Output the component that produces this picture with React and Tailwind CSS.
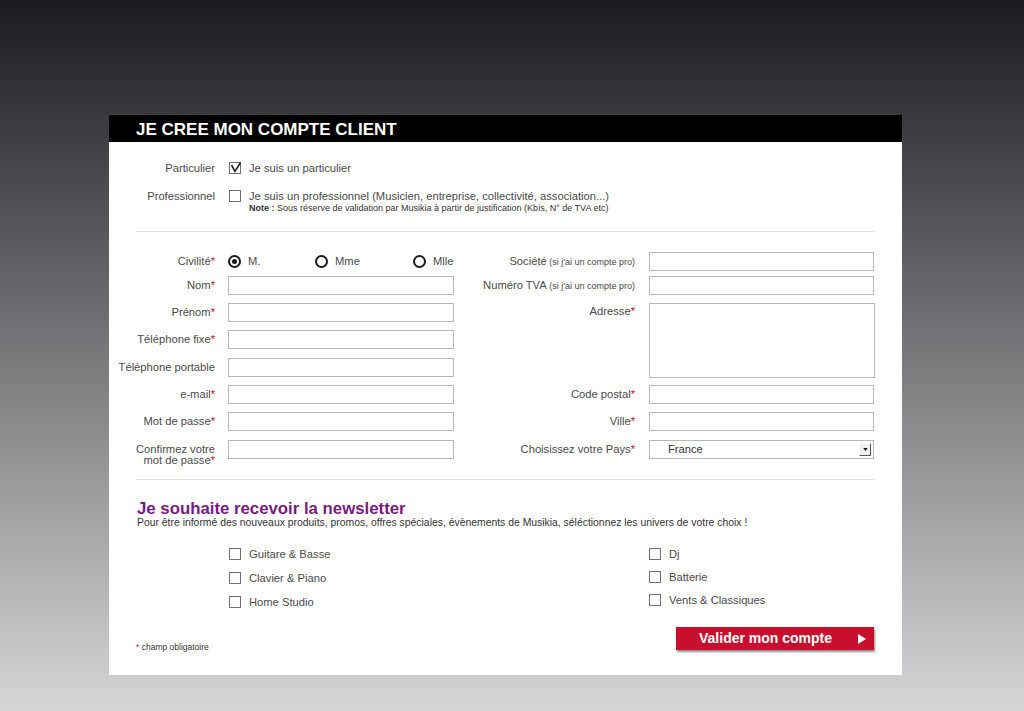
import React from "react";

// Petits composants de formulaire (style années 2010)
const Req = () => <span className="text-[#c8102e]">*</span>;

const Box = ({ checked }) => (
  <span className="relative inline-block w-[12px] h-[12px] border border-[#6f6f6f] bg-white shrink-0">
    {checked && (
      <svg viewBox="0 0 12 12" className="absolute left-[0px] top-[-1px] w-[12px] h-[12px]">
        <path d="M1.5 3 L5 9.5 L10.5 0.5" fill="none" stroke="#222" strokeWidth="1.6" />
      </svg>
    )}
  </span>
);

const Radio = ({ checked }) => (
  <span className="inline-flex items-center justify-center w-[13px] h-[13px] rounded-full border-2 border-[#1a1a1a] bg-white shrink-0">
    {checked && <span className="w-[5px] h-[5px] rounded-full bg-[#1a1a1a]" />}
  </span>
);

const Input = ({ className = "" }) => (
  <div className={`h-[19px] border border-[#b8b8b8] bg-white ${className}`} />
);

const LeftRow = ({ label, req, className = "", children }) => (
  <div className={`flex items-center ${className}`}>
    <div className="w-[106px] text-right leading-[13px]">
      {label}
      {req && <Req />}
    </div>
    <div className="ml-[13px]">{children || <Input className="w-[226px]" />}</div>
  </div>
);

const RightRow = ({ label, small, req, className = "", align = "items-center", children }) => (
  <div className={`flex ${align} ${className}`}>
    <div className="w-[181px] text-right">
      {label}
      {small && <span className="text-[9px]"> {small}</span>}
      {req && <Req />}
    </div>
    <div className="ml-[14px]">{children || <Input className="w-[225px]" />}</div>
  </div>
);

const NewsItem = ({ label }) => (
  <div className="flex items-center gap-[8px] h-[14px]">
    <Box />
    <span>{label}</span>
  </div>
);

export default function App() {
  return (
    <div
      className="min-h-screen h-[711px] bg-[linear-gradient(to_bottom,#1b1a1f,#d6d6d8)] pt-[115px] text-[#4a4a4a] text-[11.2px]"
      style={{ fontFamily: '"Liberation Sans", Arial, sans-serif' }}
    >
      <div className="ml-[109px] w-[793px] h-[560px] bg-white">

        {/* En-tête */}
        <div className="h-[27px] bg-black pl-[27px] flex items-center">
          <h1 className="text-white font-bold text-[17px] leading-none pt-[1px]">JE CREE MON COMPTE CLIENT</h1>
        </div>

        {/* Type de compte */}
        <div className="pt-[19px]">
          <div className="flex items-center h-[14px]">
            <div className="w-[106px] text-right">Particulier</div>
            <div className="ml-[14px] flex items-center gap-[8px]">
              <Box checked />
              <span>Je suis un particulier</span>
            </div>
          </div>
          <div className="flex items-start mt-[14px]">
            <div className="w-[106px] text-right leading-[14px]">Professionnel</div>
            <div className="ml-[14px] flex items-start gap-[8px]">
              <span className="mt-[1px]"><Box /></span>
              <div>
                <div className="leading-[14px]">Je suis un professionnel (Musicien, entreprise, collectivité, association...)</div>
                <div className="text-[9px] leading-[10px] text-[#333]">
                  <b>Note :</b> Sous réserve de validation par Musikia à partir de justification (Kbis, N° de TVA etc)
                </div>
              </div>
            </div>
          </div>
        </div>

        <div className="mx-[27px] mt-[18px] border-t border-[#dcdcdc]" />

        {/* Coordonnées */}
        <div className="flex pt-[20px]">
          {/* Colonne gauche */}
          <div className="flex flex-col">
            <LeftRow label="Civilité" req className="h-[19px]">
              <div className="flex items-center w-[226px]">
                <div className="flex items-center gap-[7px] w-[87px]"><Radio checked /><span>M.</span></div>
                <div className="flex items-center gap-[7px] w-[98px]"><Radio /><span>Mme</span></div>
                <div className="flex items-center gap-[7px]"><Radio /><span>Mlle</span></div>
              </div>
            </LeftRow>
            <LeftRow label="Nom" req className="mt-[5px]" />
            <LeftRow label="Prénom" req className="mt-[8px]" />
            <LeftRow label="Téléphone fixe" req className="mt-[8px]" />
            <LeftRow label="Téléphone portable" className="mt-[9px]" />
            <LeftRow label="e-mail" req className="mt-[8px]" />
            <LeftRow label="Mot de passe" req className="mt-[8px]" />
            <div className="flex items-start mt-[9px]">
              <div className="w-[106px] text-right leading-[11px] pt-[4px]">
                Confirmez votre<br />mot de passe<Req />
              </div>
              <div className="ml-[13px]"><Input className="w-[226px]" /></div>
            </div>
          </div>

          {/* Colonne droite */}
          <div className="flex flex-col">
            <RightRow label="Société" small="(si j'ai un compte pro)" />
            <RightRow label="Numéro TVA" small="(si j'ai un compte pro)" className="mt-[5px]" />
            <RightRow label="Adresse" req align="items-start" className="mt-[8px]">
              <div className="w-[226px] h-[75px] border border-[#b8b8b8] bg-white" />
            </RightRow>
            <RightRow label="Code postal" req className="mt-[7px]" />
            <RightRow label="Ville" req className="mt-[8px]" />
            <RightRow label="Choisissez votre Pays" req className="mt-[9px]">
              <div className="w-[225px] h-[19px] border border-[#b8b8b8] bg-white flex items-center justify-between pl-[18px] pr-[2px]">
                <span className="text-[#333]">France</span>
                <span className="w-[12px] h-[13px] bg-[#f0f0f0] border-r border-b border-[#555] border-t border-l border-t-white border-l-white flex items-center justify-center">
                  <svg viewBox="0 0 6 4" className="w-[5px] h-[3px]"><path d="M0 0 H6 L3 4 Z" fill="#111" /></svg>
                </span>
              </div>
            </RightRow>
          </div>
        </div>

        <div className="mx-[27px] mt-[13px] border-t border-[#dcdcdc]" />

        {/* Newsletter */}
        <div className="pl-[28px] pt-[20px]">
          <h2 className="text-[#7a1a82] font-bold text-[16.8px] leading-[17px]">Je souhaite recevoir la newsletter</h2>
          <p className="text-[10.4px] leading-[12px] text-[#333]">
            Pour être informé des nouveaux produits, promos, offres spéciales, évènements de Musikia, séléctionnez les univers de votre choix !
          </p>
        </div>

        <div className="flex pt-[18px]">
          <div className="ml-[120px] w-[420px] flex flex-col gap-[10px]">
            <NewsItem label="Guitare & Basse" />
            <NewsItem label="Clavier & Piano" />
            <NewsItem label="Home Studio" />
          </div>
          <div className="flex flex-col gap-[9px]">
            <NewsItem label="Dj" />
            <NewsItem label="Batterie" />
            <NewsItem label="Vents & Classiques" />
          </div>
        </div>

        {/* Pied */}
        <div className="flex items-end justify-between pl-[27px] pr-[28px] mt-[18px]">
          <p className="text-[8.5px] leading-[10px] text-[#333] -mb-[2px]"><Req /> champ obligatoire</p>
          <button className="w-[198px] h-[23px] bg-[#c8102e] text-white font-bold text-[14px] flex items-center justify-between pl-[23px] pr-[8px] shadow-[1px_2px_2px_rgba(0,0,0,0.45)]">
            <span>Valider mon compte</span>
            <svg viewBox="0 0 8 10" className="w-[8px] h-[10px]"><path d="M0 0 L8 5 L0 10 Z" fill="#fff" /></svg>
          </button>
        </div>

      </div>
    </div>
  );
}
